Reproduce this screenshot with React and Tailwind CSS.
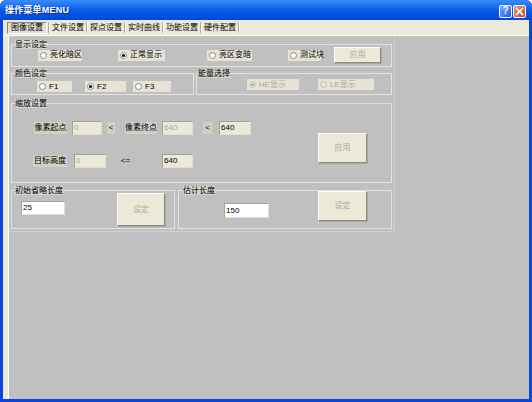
import React from "react";

function Radio({ label, checked, disabled, className }) {
  return (
    <div className={`flex items-center h-[11px] bg-[#E6E3D6] pl-[2px] gap-[3px] ${className}`}>
      <span
        className={`w-[7px] h-[7px] rounded-full border flex items-center justify-center shrink-0 ${
          disabled ? "bg-[#ECE9D8] border-[#c2beb0]" : "bg-white border-[#8a8a8a]"
        }`}
      >
        {checked && (
          <span className={`w-[3px] h-[3px] rounded-full ${disabled ? "bg-[#aca899]" : "bg-black"}`} />
        )}
      </span>
      <span className={`whitespace-nowrap ${disabled ? "text-[#aca899]" : "text-black"}`}>{label}</span>
    </div>
  );
}

function Btn({ label, className }) {
  return (
    <div
      className={`flex items-center justify-center bg-[#ECE9D8] border border-t-white border-l-white border-r-[#8c8a80] border-b-[#8c8a80] shadow-[1px_1px_0_#a8a8a0] text-[#aca899] shrink-0 ${className}`}
    >
      {label}
    </div>
  );
}

function Field({ value, white, dim, className }) {
  return (
    <div
      className={`flex items-center pl-[1px] border border-t-[#a5a294] border-l-[#a5a294] border-r-[#e2dfd2] border-b-[#e2dfd2] shrink-0 ${
        white ? "bg-white" : "bg-[#ECE9D8]"
      } ${dim ? "text-[#aca899]" : "text-black"} ${className}`}
    >
      {value}
    </div>
  );
}

function Label({ text, className }) {
  return (
    <div className={`flex items-center justify-center h-[12px] bg-[#d2cfc6] whitespace-nowrap shrink-0 ${className}`}>
      {text}
    </div>
  );
}

function Group({ title, legendClass, className, children }) {
  return (
    <fieldset className={`border border-[#e2e2e2] min-w-0 ${className}`}>
      <legend className={`bg-[#d6d3cc] leading-[9px] h-[9px] px-0 whitespace-nowrap ${legendClass}`}>{title}</legend>
      {children}
    </fieldset>
  );
}

export default function App() {
  const tabs = ["文件设置", "探点设置", "实时曲线", "功能设置", "硬件配置"];
  return (
    <div className="w-[532px] h-[402px] flex flex-col bg-[#0A46D8] rounded-t-[6px] overflow-hidden font-['Liberation_Sans','Noto_Sans_CJK_SC',sans-serif] text-[8px] leading-[10px] text-black">
      {/* Title bar */}
      <div className="h-[20px] shrink-0 flex items-center justify-between pl-[5px] pr-[6px] bg-gradient-to-b from-[#3A8CFA] via-[#0A5CEB] to-[#0048DA]">
        <span className="text-white font-bold text-[9px] leading-[11px] tracking-[0.2px] [text-shadow:1px_1px_0_#0a2a8a]">
          操作菜单MENU
        </span>
        <div className="flex items-center gap-[1px] pt-[2px]">
          <div className="w-[13px] h-[13px] rounded-[2px] border border-white bg-gradient-to-br from-[#6FA6FF] to-[#1F5FE6] flex items-center justify-center text-white font-bold text-[10px] leading-[10px]">
            ?
          </div>
          <div className="w-[13px] h-[13px] rounded-[2px] border border-white bg-gradient-to-br from-[#EE9478] to-[#D0401E] flex items-center justify-center">
            <svg width="9" height="9" viewBox="0 0 9 9">
              <path d="M1.5 1.5 L7.5 7.5 M7.5 1.5 L1.5 7.5" stroke="white" strokeWidth="1.6" strokeLinecap="square" />
            </svg>
          </div>
        </div>
      </div>

      {/* Body */}
      <div className="flex-1 mx-[3px] mb-[3px] flex flex-col bg-[#ECE9D8]">
        {/* Tabs */}
        <div className="h-[16px] shrink-0 flex items-end pl-[4px] border-b border-white pb-px">
          <div className="h-[12px] w-[40px] flex items-center justify-center border border-t-[#8a887c] border-l-[#8a887c] border-r-white border-b-white bg-[#E2DFD2]">
            图像设置
          </div>
          <div className="w-[2px] h-[11px] border-l border-[#aca899] border-r border-r-white ml-[1px] mb-[1px]" />
          {tabs.map((t) => (
            <React.Fragment key={t}>
              <div className="h-[12px] w-[36px] flex items-center justify-center">{t}</div>
              <div className="w-[2px] h-[11px] border-l border-[#aca899] border-r border-r-white mb-[1px]" />
            </React.Fragment>
          ))}
        </div>

        <div className="flex-1 flex">
          <div className="w-[6px] shrink-0 bg-[#ECE9D8] border-r border-white" />
          <div className="flex-1 bg-[#C0C0C0]">
            <div className="w-[386px] h-[196px] pl-[2px] pt-[4px] border-r border-b border-[#d0d0d0] flex flex-col">
              {/* 显示设定 */}
              <Group title="显示设定" legendClass="ml-[3px]" className="w-[381px] pb-[3px]">
                <div className="flex items-center h-[16px] -mt-[2px]">
                  <Radio label="亮化暗区" className="ml-[26px] w-[44px]" />
                  <Radio label="正常显示" checked className="ml-[36px] w-[47px]" />
                  <Radio label="亮区变暗" className="ml-[42px] w-[45px]" />
                  <Radio label="测试块" className="ml-[36px] w-[33px]" />
                  <Btn label="应用" className="ml-[13px] w-[47px] h-[16px]" />
                </div>
              </Group>

              {/* 颜色 / 能量 */}
              <div className="flex mt-[2px] w-[381px]">
                <Group title="颜色设定" legendClass="ml-[3px]" className="w-[183px] pt-[3px] pb-[2px]">
                  <div className="flex items-center">
                    <Radio label="F1" className="ml-[25px] w-[35px]" />
                    <Radio label="F2" checked className="ml-[13px] w-[41px]" />
                    <Radio label="F3" className="ml-[7px] w-[38px]" />
                  </div>
                </Group>
                <Group title="能量选择" legendClass="ml-[1px]" className="w-[196px] ml-[2px] pt-[1px] pb-[4px]">
                  <div className="flex items-center">
                    <Radio label="HE显示" checked disabled className="ml-[50px] w-[52px]" />
                    <Radio label="LE显示" disabled className="ml-[19px] w-[56px]" />
                  </div>
                </Group>
              </div>

              {/* 缩放设置 */}
              <Group title="缩放设置" legendClass="ml-[3px]" className="w-[381px] mt-[4px] pb-[14px]">
                <div className="flex items-start">
                  <div className="w-[238px] flex flex-col">
                    <div className="flex items-center h-[14px] mt-[13px]">
                      <Label text="像素起点" className="ml-[22px] w-[33px]" />
                      <Field value="0" dim className="ml-[5px] w-[30px] h-[14px]" />
                      <Label text="<" className="ml-[5px] w-[8px]" />
                      <Label text="像素终点" className="ml-[10px] w-[32px]" />
                      <Field value="640" dim className="ml-[5px] w-[31px] h-[14px]" />
                      <Label text="<" className="ml-[10px] w-[9px]" />
                      <Field value="640" className="ml-[7px] w-[32px] h-[14px]" />
                    </div>
                    <div className="flex items-center h-[14px] mt-[19px]">
                      <Label text="目标高度" className="ml-[21px] w-[34px]" />
                      <Field value="0" dim className="ml-[7px] w-[32px] h-[14px]" />
                      <Label text="<=" className="ml-[15px] w-[9px] bg-transparent" />
                      <Field value="640" className="ml-[32px] w-[31px] h-[14px]" />
                    </div>
                  </div>
                  <Btn label="应用" className="ml-[68px] mt-[25px] w-[49px] h-[30px]" />
                </div>
              </Group>

              {/* 初始省略长度 / 估计长度 */}
              <div className="flex mt-[3px] w-[381px]">
                <Group title="初始省略长度" legendClass="ml-[3px]" className="w-[164px] pb-[2px]">
                  <div className="flex items-start">
                    <Field value="25" white className="ml-[9px] mt-[6px] w-[44px] h-[14px]" />
                    <Btn label="设定" className="ml-[52px] -mt-[2px] w-[48px] h-[33px]" />
                  </div>
                </Group>
                <Group title="估计长度" legendClass="ml-[4px]" className="w-[214px] ml-[3px] pb-[2px]">
                  <div className="flex items-start">
                    <Field value="150" white className="ml-[45px] mt-[8px] w-[45px] h-[15px]" />
                    <Btn label="设定" className="ml-[49px] -mt-[4px] w-[49px] h-[30px]" />
                  </div>
                </Group>
              </div>
            </div>
          </div>
        </div>
      </div>
    </div>
  );
}
